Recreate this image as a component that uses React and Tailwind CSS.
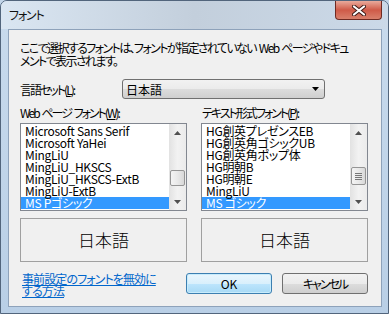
function Arrow({ up }) {
  return (
    <div className="h-[17px] flex items-center justify-center">
      <svg width="7" height="4" viewBox="0 0 7 4">
        {up ? <path d="M0 4 L3.5 0 L7 4 Z" fill="#505050" /> : <path d="M0 0 L7 0 L3.5 4 Z" fill="#505050" />}
      </svg>
    </div>
  );
}

function ScrollBar({ grip, thumbTop }) {
  return (
    <div className="w-[17px] h-full flex flex-col bg-gradient-to-r from-[#e2e2e2] via-[#f2f2f2] to-[#ebebeb]">
      <Arrow up />
      <div className="flex-1 px-[1px]">
        <div
          className={
            (thumbTop === 29 ? "mt-[29px] h-[16px] " : "mt-[26px] h-[18px] ") +
            "w-[15px] rounded-[2px] border border-[#959595] bg-gradient-to-r from-[#f4f4f4] via-[#e9e9e9] to-[#d8d8d8] flex flex-col items-center justify-center gap-[1px]"
          }
        >
          {grip && (
            <>
              <div className="w-[7px] h-[1px] bg-[#777]" />
              <div className="w-[7px] h-[1px] bg-[#777]" />
              <div className="w-[7px] h-[1px] bg-[#777]" />
              <div className="w-[7px] h-[1px] bg-[#777]" />
            </>
          )}
        </div>
      </div>
      <Arrow />
    </div>
  );
}

function FontList({ items, selected, grip, thumbTop }) {
  return (
    <div className="w-[167px] h-[88px] border border-[#828790] bg-white flex">
      <div className="flex-1 pt-[1px] overflow-hidden">
        {items.map((t, i) => (
          <div
            key={i}
            className={
              "h-[12px] leading-[12px] text-[12px] pl-[4px] whitespace-nowrap tracking-[-0.3px] " +
              (i === selected ? "bg-[#3399ff] text-white" : "text-black")
            }
          >
            {t}
          </div>
        ))}
      </div>
      <ScrollBar grip={grip} thumbTop={thumbTop} />
    </div>
  );
}

export default function App() {
  return (
    <div className="w-[389px] h-[314px] bg-[#c2d5e9] font-['Noto_Sans_CJK_JP',sans-serif] [font-feature-settings:'palt'] text-black">
      <div className="w-[389px] h-[314px] border border-[#52657c] rounded-t-[7px] flex flex-col overflow-hidden bg-gradient-to-b from-[#c9dbed] to-[#b9cfe6]">
        {/* title bar */}
        <div className="h-[28px] flex items-start bg-gradient-to-r from-[#dae6f2] via-[#c3cfdc] to-[#cbd9e8]">
          <div className="pl-[8px] pt-[7px] text-[12px] leading-[14px] text-[#111] tracking-[-1.2px]">フォント</div>
          <div className="flex-1" />
          <div className="mr-[6px] w-[47px] h-[19px] rounded-b-[4px] border border-t-0 border-[#6f2a22] bg-gradient-to-b from-[#e8aa9c] via-[#cf5a48] to-[#d9806c] flex items-center justify-center">
            <svg width="14" height="11" viewBox="0 0 14 11">
              <path d="M2 1.5 L12 9.5 M12 1.5 L2 9.5" stroke="#3b1a16" strokeWidth="4" strokeLinecap="round" />
              <path d="M2 1.5 L12 9.5 M12 1.5 L2 9.5" stroke="#ffffff" strokeWidth="2.2" strokeLinecap="round" />
            </svg>
          </div>
        </div>
        {/* client */}
        <div className="ml-[7px] w-[374px] h-[278px] border border-[#8ea2ba] bg-[#f0f0f0] pl-[11px] pt-[11px] text-[12px]">
          <div className="leading-[13px] whitespace-nowrap tracking-[-1.6px]">
            ここで選択するフォントは、フォントが指定されていない<span className="tracking-[0px]"> </span>Web<span className="tracking-[0px]"> </span>ページやドキュ
            <br />
            メントで表示されます。
          </div>
          <div className="mt-[12px] flex items-center h-[20px]">
            <div className="w-[102px] leading-[13px] tracking-[-2px]">
              言語セット(<u>L</u>):
            </div>
            <div className="w-[203px] h-[20px] rounded-[3px] border border-[#707070] bg-[linear-gradient(to_bottom,#f2f2f2_0%,#ebebeb_50%,#dddddd_50%,#cfcfcf_100%)] flex items-center pl-[3px] pr-[5px]">
              <span className="flex-1 leading-[13px]">日本語</span>
              <svg width="7" height="4" viewBox="0 0 7 4">
                <path d="M0 0 L7 0 L3.5 4 Z" fill="#000" />
              </svg>
            </div>
          </div>
          <div className="mt-[7px] flex gap-[14px] leading-[13px] tracking-[-2px]">
            <div className="w-[167px]">
              Web<span className="tracking-[0px]"> </span>ページ<span className="tracking-[0px]"> </span>フォント(<u>W</u>):
            </div>
            <div className="w-[167px] pl-[1px]">
              テキスト形式フォント(<u>P</u>):
            </div>
          </div>
          <div className="mt-[4px] flex gap-[14px]">
            <FontList
              items={[
                "Microsoft Sans Serif",
                "Microsoft YaHei",
                "MingLiU",
                "MingLiU_HKSCS",
                "MingLiU_HKSCS-ExtB",
                "MingLiU-ExtB",
                "MS Pゴシック",
              ]}
              selected={6}
              thumbTop={29}
            />
            <FontList
              items={[
                "HG創英プレゼンスEB",
                "HG創英角ゴシックUB",
                "HG創英角ポップ体",
                "HG明朝B",
                "HG明朝E",
                "MingLiU",
                "MS ゴシック",
              ]}
              selected={6}
              grip
              thumbTop={26}
            />
          </div>
          <div className="mt-[7px] flex gap-[14px]">
            <div className="w-[167px] h-[44px] border border-[#a0a0a0] flex items-center justify-center text-[17px] font-light leading-[20px]">
              日本語
            </div>
            <div className="w-[167px] h-[44px] border border-[#a0a0a0] flex items-center justify-center text-[17px] font-light leading-[20px]">
              日本語
            </div>
          </div>
          <div className="mt-[11px] flex items-start">
            <div className="w-[166px] pl-[2px] leading-[12px] text-[#0066cc] underline whitespace-nowrap tracking-[-0.9px]">
              事前設定のフォントを無効に
              <br />
              する方法
            </div>
            <div className="w-[86px] h-[21px] rounded-[3px] border border-[#3c7fb1] bg-[linear-gradient(to_bottom,#eaf6fd_0%,#d9f0fc_50%,#bee6fd_50%,#a7d9f5_100%)] shadow-[inset_0_0_0_1px_#c8ecfc] flex items-center justify-center leading-[13px]">
              OK
            </div>
            <div className="ml-[10px] w-[86px] h-[21px] rounded-[3px] border border-[#707070] bg-[linear-gradient(to_bottom,#f2f2f2_0%,#ebebeb_50%,#dddddd_50%,#cfcfcf_100%)] flex items-center justify-center leading-[13px] tracking-[-2px]">
              キャンセル
            </div>
          </div>
        </div>
      </div>
    </div>
  );
}
